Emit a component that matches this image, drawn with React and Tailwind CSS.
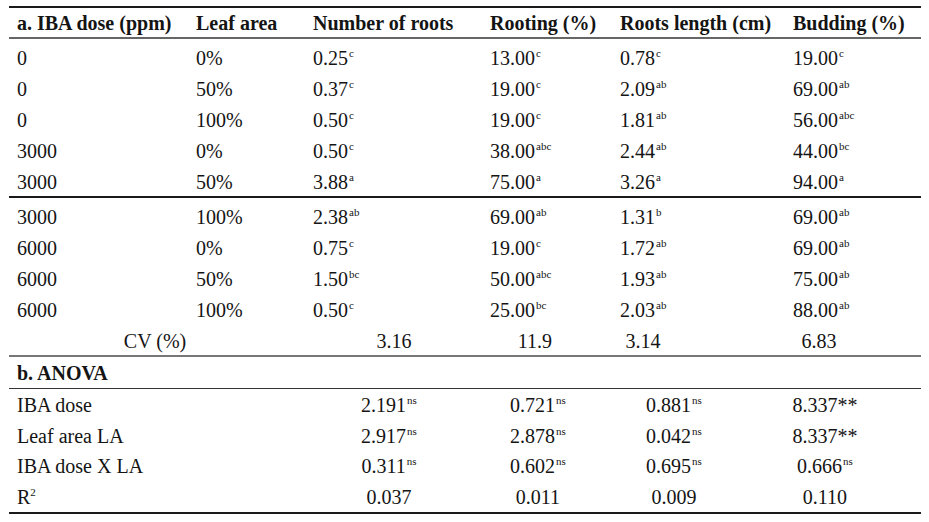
import React from "react";

const cols = "grid grid-cols-[187px_117px_177px_130px_173px_128px]";

const block1 = [
  ["0", "0%", ["0.25", "c"], ["13.00", "c"], ["0.78", "c"], ["19.00", "c"]],
  ["0", "50%", ["0.37", "c"], ["19.00", "c"], ["2.09", "ab"], ["69.00", "ab"]],
  ["0", "100%", ["0.50", "c"], ["19.00", "c"], ["1.81", "ab"], ["56.00", "abc"]],
  ["3000", "0%", ["0.50", "c"], ["38.00", "abc"], ["2.44", "ab"], ["44.00", "bc"]],
  ["3000", "50%", ["3.88", "a"], ["75.00", "a"], ["3.26", "a"], ["94.00", "a"]],
];

const block2 = [
  ["3000", "100%", ["2.38", "ab"], ["69.00", "ab"], ["1.31", "b"], ["69.00", "ab"]],
  ["6000", "0%", ["0.75", "c"], ["19.00", "c"], ["1.72", "ab"], ["69.00", "ab"]],
  ["6000", "50%", ["1.50", "bc"], ["50.00", "abc"], ["1.93", "ab"], ["75.00", "ab"]],
  ["6000", "100%", ["0.50", "c"], ["25.00", "bc"], ["2.03", "ab"], ["88.00", "ab"]],
];

const anova = [
  ["IBA dose", ["2.191", "ns"], ["0.721", "ns"], ["0.881", "ns"], ["8.337**", ""]],
  ["Leaf area LA", ["2.917", "ns"], ["2.878", "ns"], ["0.042", "ns"], ["8.337**", ""]],
  ["IBA dose X LA", ["0.311", "ns"], ["0.602", "ns"], ["0.695", "ns"], ["0.666", "ns"]],
];

const Val = ({ v }) => (
  <span>
    {v[0]}
    {v[1] && <sup className="text-[11px] -top-[8px] ml-[1px]">{v[1]}</sup>}
  </span>
);

const DataRow = ({ r }) => (
  <div className={`${cols} h-[31px] pt-[3px] items-center`}>
    <div className="pl-2">{r[0]}</div>
    <div>{r[1]}</div>
    <div><Val v={r[2]} /></div>
    <div><Val v={r[3]} /></div>
    <div><Val v={r[4]} /></div>
    <div><Val v={r[5]} /></div>
  </div>
);

const AnovaRow = ({ label, cells }) => (
  <div className="flex h-[30.75px] pt-[1px] items-center">
    <div className="w-[300px] pl-2">{label}</div>
    <div className="w-[160px] text-center">{cells[0]}</div>
    <div className="w-[138px] text-center">{cells[1]}</div>
    <div className="w-[134px] text-center">{cells[2]}</div>
    <div className="w-[168px] text-center">{cells[3]}</div>
  </div>
);

export default function App() {
  return (
    <div className="w-[929px] h-[522px] bg-white text-[#141414] text-[20px] leading-none font-['Liberation_Serif','Times_New_Roman',serif] overflow-hidden">
      <div className="ml-[9px] w-[912px] pt-[6px]">
        {/* header */}
        <div className={`${cols} h-[33px] items-center font-bold border-t-2 border-[#1a1a1a] border-b-2 border-b-[#666]`}>
          <div className="pl-2 whitespace-nowrap">a. IBA dose (ppm)</div>
          <div>Leaf area</div>
          <div>Number of roots</div>
          <div>Rooting (%)</div>
          <div>Roots length (cm)</div>
          <div>Budding (%)</div>
        </div>

        <div className="pt-[2px] border-b-2 border-[#1a1a1a]">
          {block1.map((r, i) => (
            <DataRow key={i} r={r} />
          ))}
        </div>

        <div className="pt-[2px] border-b-2 border-[#777]">
          {block2.map((r, i) => (
            <DataRow key={i} r={r} />
          ))}
          {/* CV row */}
          <div className="flex h-[31px] pt-[3px] items-center">
            <div className="w-[292px] text-center">CV (%)</div>
            <div className="w-[186px] text-center">3.16</div>
            <div className="w-[96px] text-center">11.9</div>
            <div className="w-[120px] text-center">3.14</div>
            <div className="w-[218px] text-center pl-[14px]">6.83</div>
          </div>
        </div>

        <div className="h-[32px] flex items-center pl-2 font-bold border-b border-[#333]">
          b. ANOVA
        </div>

        <div className="border-b-2 border-[#1a1a1a]">
          {anova.map((a, i) => (
            <AnovaRow
              key={i}
              label={a[0]}
              cells={[<Val v={a[1]} />, <Val v={a[2]} />, <Val v={a[3]} />, <Val v={a[4]} />]}
            />
          ))}
          <AnovaRow
            label={
              <span>
                R<sup className="text-[11px] -top-[8px]">2</sup>
              </span>
            }
            cells={["0.037", "0.011", "0.009", "0.110"]}
          />
        </div>
      </div>
    </div>
  );
}
